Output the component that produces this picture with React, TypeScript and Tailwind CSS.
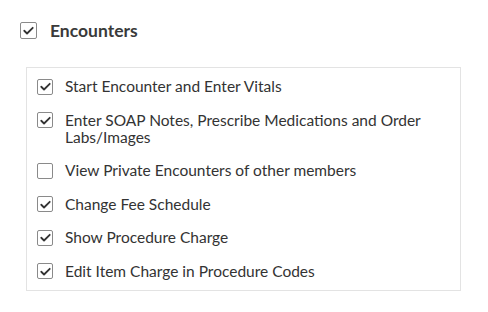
import React from 'react';

const items = [
  { label: 'Start Encounter and Enter Vitals', checked: true },
  { label: 'Enter SOAP Notes, Prescribe Medications and Order Labs/Images', checked: true },
  { label: 'View Private Encounters of other members', checked: false },
  { label: 'Change Fee Schedule', checked: true },
  { label: 'Show Procedure Charge', checked: true },
  { label: 'Edit Item Charge in Procedure Codes', checked: true },
];

function Box({ checked, size = 'sm' }: { checked: boolean; size?: 'sm' | 'lg' }) {
  const dim = size === 'lg' ? 'h-[17px] w-[17px]' : 'h-4 w-4';
  return (
    <span className={`flex shrink-0 items-center justify-center rounded-[2px] border border-[#8a8a8a] bg-white ${dim}`}>
      {checked && (
        <svg viewBox="0 0 16 16" className="h-[13px] w-[13px]" fill="none" stroke="#333" strokeWidth="2.2" strokeLinecap="round" strokeLinejoin="round">
          <path d="M2.8 8.3l3.4 3.4 7-7" />
        </svg>
      )}
    </span>
  );
}

export default function App() {
  return (
    <div className="bg-white pl-5 pt-[22px] text-[#333]" style={{ fontFamily: 'Lato, "Noto Sans", sans-serif' }}>
      <div className="flex items-center gap-[13px]">
        <Box checked size="lg" />
        <span className="text-[17.5px] font-bold leading-[17px] text-[#3a3a3a]">Encounters</span>
      </div>

      <div className="ml-[6px] mt-[28px] w-[435px] border border-[#e3e3e3] py-[10px] pl-[10px] pr-4">
        <div className="flex flex-col gap-[16.5px]">
          {items.map((it) => (
            <div key={it.label} className="flex items-start gap-3">
              <span className="pt-[0.5px]"><Box checked={it.checked} /></span>
              <span className="text-[15.5px] leading-[17px]">{it.label}</span>
            </div>
          ))}
        </div>
      </div>
    </div>
  );
}
